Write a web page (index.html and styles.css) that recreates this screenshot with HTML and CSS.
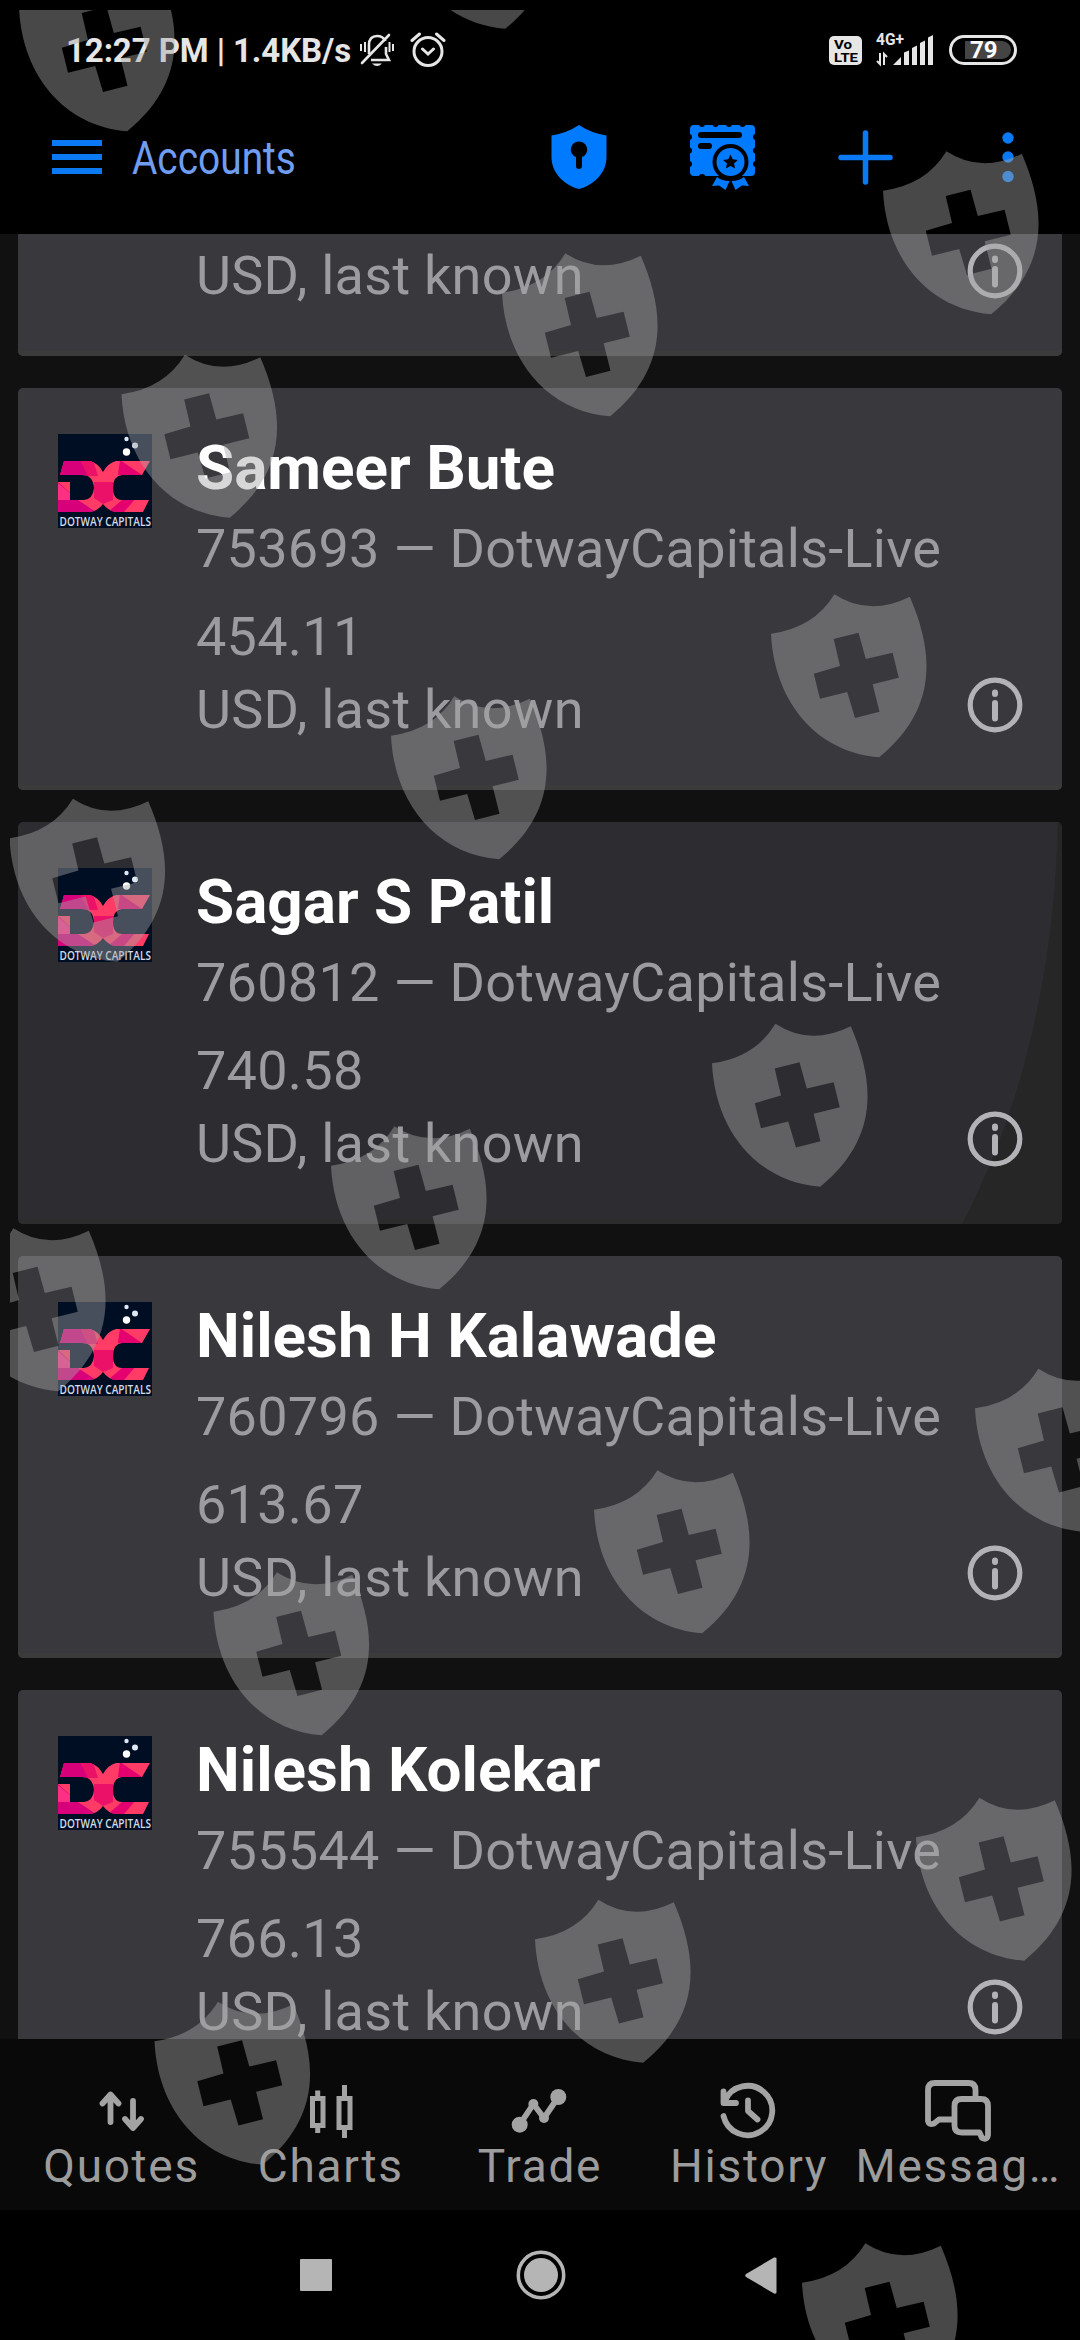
FILE: index.html
```html
<!DOCTYPE html>
<html lang="en">
<head>
<meta charset="utf-8">
<title>Accounts</title>
<link rel="stylesheet" href="styles.css">
</head>
<body>
<svg class="defs" aria-hidden="true">
  <defs>
    <symbol id="info" viewBox="0 0 56 56">
      <circle cx="28" cy="28" r="24.8" fill="none" stroke="currentColor" stroke-width="5.200"/>
      <path d="M28 15.500v1.500M28 26v15.500" stroke="currentColor" stroke-width="6" stroke-linecap="round"/>
    </symbol>
    <clipPath id="dc"><path d="M6 27H32Q40 29 45 38Q50 29 58 27H92L84 41H64Q55 42 55 54Q55 66 64 66H91L85 78H58Q50 77 45 70Q40 77 32 78H0V48H12V66H26Q35 65 36 54Q35 41 24 41H2Z"/></clipPath>
    <symbol id="logo" viewBox="0 0 94 94">
      <rect width="94" height="94" fill="#000e24"/>
      <g clip-path="url(#dc)">
        <rect width="94" height="94" fill="#ff3b66"/>
        <path d="M0 26H22L34 42H0ZM0 48L20 66L38 78H0Z" fill="#d8007a"/>
        <path d="M22 26H35L40 42H30ZM36 48H55V66L45 70L36 64Z" fill="#ec1168"/>
        <path d="M62 26L84 41H60ZM64 66L78 64L66 78H50Z" fill="#e5006f"/>
        <path d="M0 49L20 66H0Z" fill="#ff2f86"/>
      </g>
      <circle cx="68.500" cy="5" r="2.200" fill="#dfe9f5"/><circle cx="77" cy="11.500" r="3" fill="#dfe9f5"/><circle cx="68.500" cy="18" r="3.700" fill="#fff"/>
      <text x="1.500" y="91.500" class="logo-text" textLength="91.500" lengthAdjust="spacingAndGlyphs">DOTWAY CAPITALS</text>
    </symbol>
    <symbol id="guard" viewBox="0 0 160 168" overflow="visible">
      <path fill-rule="evenodd" d="M0 39.700Q43 34 63.400 0.300Q98 23 138.800 2.700C164 61 166 116 108.200 163.300C44 158 3 106 0 39.700ZM62.700 45L87.500 38.700L94.800 65L121.600 58.700L127.800 83.700L101.600 90.300L108.500 117.700L84 124L76.200 98L49 104.700L42.800 79.700L69 72Z"/>
    </symbol>
  </defs>
</svg>

<div class="screen">
  <header class="top">
    <div class="status">
      <span class="clock">12:27 PM | 1.4KB/s</span>
      <svg class="bell" width="36" height="36" viewBox="0 0 36 36" fill="none" stroke="#e6e6e6" stroke-width="2.600">
        <path d="M10 22V13C10 7 13 4 18 4C22 4 25 6 26.500 9M27 15V22L30 28H12"/>
        <path d="M30 3L3 31" stroke-linecap="round"/>
        <path d="M2 12v7M6 10v10M34 12v7M30.500 10v10" stroke-width="2"/>
        <path d="M13 31.500h10q-5 5-10 0Z" fill="#e6e6e6" stroke="none"/>
      </svg>
      <svg class="alarm" width="36" height="36" viewBox="0 0 36 36" fill="none" stroke="#e6e6e6" stroke-width="3">
        <circle cx="18" cy="19.500" r="14"/><path d="M12.500 17l5.500 5l5.500-5M2 8.500L9.500 2M34 8.500L26.500 2" stroke-linecap="round"/>
      </svg>
      <svg class="volte" width="33" height="29" viewBox="0 0 33 29">
        <rect width="33" height="29" rx="5" fill="#e6e6e6"/>
        <text x="5" y="13" class="volte-text" textLength="18" lengthAdjust="spacingAndGlyphs">Vo</text>
        <text x="5" y="25.500" class="volte-text" textLength="24" lengthAdjust="spacingAndGlyphs">LTE</text>
      </svg>
      <svg class="signal" width="58" height="34" viewBox="0 0 58 34" fill="#e6e6e6">
        <text x="0" y="12" class="net-text" textLength="28" lengthAdjust="spacingAndGlyphs">4G+</text>
        <path d="M17 32h8v-8zM28 19.500l5-2V32h-5zM36 15l5-2.500V32h-5zM44 10l5-2.500V32h-5zM52 4.500l5-2.500V32h-5z"/>
        <path d="M4 20V31L1 28M8 32V21L11 24" fill="none" stroke="#e6e6e6" stroke-width="2"/>
      </svg>
      <div class="battery"><span class="battery-text">79</span></div>
    </div>
    <div class="appbar">
      <svg class="menu" width="50" height="34" viewBox="0 0 50 34" fill="#0b79f3"><path d="M0 0h50v6H0zM0 14h50v6H0zM0 28h50v6H0z"/></svg>
      <h1 class="title">Accounts</h1>
      <svg class="lock" width="56" height="64" viewBox="0 0 56 64"><path fill="#007aff" fill-rule="evenodd" d="M28 0Q40 8 55.500 10.500V32C55.500 48 43 60 28 64C13 60 .5 48 .5 32V10.500Q16 8 28 0ZM28 16.500a8 8 0 0 0-3 15.500V41a3 3 0 0 0 6 0V32a8 8 0 0 0-3-15.500Z"/></svg>
      <svg class="cert" width="67" height="66" viewBox="0 0 67 66">
        <rect x="1" y="1" width="65" height="51" rx="4" fill="#007aff"/>
        <g fill="#000">
          <circle cx="13" cy="0" r="3"/><circle cx="26.500" cy="0" r="3"/><circle cx="40" cy="0" r="3"/><circle cx="53.500" cy="0" r="3"/>
          <circle cx="13" cy="53.500" r="3.500"/>
          <circle cx="0" cy="13" r="3"/><circle cx="0" cy="26.500" r="3"/><circle cx="0" cy="40" r="3"/>
          <circle cx="67" cy="13" r="3"/><circle cx="67" cy="26.500" r="3"/><circle cx="67" cy="40" r="3"/>
          <rect x="9" y="8" width="44" height="6" rx="3"/><rect x="9" y="19" width="14" height="6" rx="3"/>
          <circle cx="41.500" cy="38" r="18"/>
        </g>
        <path fill="#007aff" d="M28 53L23 62L30 61.500L36.500 66L40.500 57Q33 57 28 53ZM55 53L60 62L53 61.500L46.500 66L42.500 57Q50 57 55 53Z"/>
        <circle cx="41.500" cy="38" r="14" fill="#007aff"/>
        <path fill="#000" d="M41.500 30.500l2.200 4.800l5.200.6l-3.900 3.500l1.100 5.200l-4.600-2.600l-4.600 2.600l1.100-5.200l-3.900-3.500l5.200-.6z"/>
      </svg>
      <svg class="plus" width="55" height="55" viewBox="0 0 55 55"><path d="M27.500 3v49M3 27.500h49" stroke="#0b79f3" stroke-width="5.500" stroke-linecap="round"/></svg>
      <svg class="dots" width="12" height="52" viewBox="0 0 12 52" fill="#0b79f3"><circle cx="6" cy="7" r="5.700"/><circle cx="6" cy="26" r="5.700"/><circle cx="6" cy="45.500" r="5.700"/></svg>
    </div>
  </header>

  <main class="list">
    <article class="card card--cut"><p class="line">USD, last known</p><svg class="info"><use href="#info"/></svg></article>
    <article class="card">
      <svg class="logo"><use href="#logo"/></svg>
      <div class="text"><h2 class="name">Sameer Bute</h2><p class="line server">753693 — DotwayCapitals-Live</p><p class="line amount">454.11</p><p class="line">USD, last known</p></div>
      <svg class="info"><use href="#info"/></svg>
    </article>
    <article class="card card--active">
      <svg class="ripple" viewBox="0 0 1044 402" preserveAspectRatio="none"><path d="M1040 0Q1034 230 944 402H1044V0Z" fill="#262626"/></svg>
      <svg class="logo"><use href="#logo"/></svg>
      <div class="text"><h2 class="name">Sagar S Patil</h2><p class="line server">760812 — DotwayCapitals-Live</p><p class="line amount">740.58</p><p class="line">USD, last known</p></div>
      <svg class="info"><use href="#info"/></svg>
    </article>
    <article class="card">
      <svg class="logo"><use href="#logo"/></svg>
      <div class="text"><h2 class="name">Nilesh H Kalawade</h2><p class="line server">760796 — DotwayCapitals-Live</p><p class="line amount">613.67</p><p class="line">USD, last known</p></div>
      <svg class="info"><use href="#info"/></svg>
    </article>
    <article class="card">
      <svg class="logo"><use href="#logo"/></svg>
      <div class="text"><h2 class="name">Nilesh Kolekar</h2><p class="line server">755544 — DotwayCapitals-Live</p><p class="line amount">766.13</p><p class="line">USD, last known</p></div>
      <svg class="info"><use href="#info"/></svg>
    </article>
  </main>

  <nav class="tabs">
    <div class="tab"><svg viewBox="0 0 70 70"><path d="M23.500 47V20M15.500 28.500L23.500 19.500L31.500 28.500M46 26V52M38 44L46 53L54 44"/></svg><span>Quotes</span></div>
    <div class="tab"><svg viewBox="0 0 70 70"><path class="sharp" d="M16.500 23.500h10.500v27H16.500ZM43 23.500h11v29H43ZM21.700 15.500v8M21.700 50v8M48.500 10v13M48.500 53v10"/></svg><span>Charts</span></div>
    <div class="tab"><svg viewBox="0 0 70 70"><path d="M14.700 49.700L28.400 29L39 43L53.300 22"/><g class="solid"><circle cx="14.700" cy="49.700" r="8"/><circle cx="28.400" cy="29" r="5"/><circle cx="39" cy="43" r="5"/><circle cx="53.300" cy="22" r="8"/></g></svg><span>Trade</span></div>
    <div class="tab"><svg viewBox="0 0 70 70"><path d="M9.500 41A24.700 24.700 0 1 0 11 25.500M9.500 16.500V28H22M34 25.500V36L43.500 44.500"/></svg><span>History</span></div>
    <div class="tab"><svg viewBox="0 0 70 70"><path d="M52.500 23V15Q52.500 8 45.500 8H12Q5 8 5 15V46Q6 50.500 11 48.500L16 44.500H30M38.500 24H58Q65 24 65 31V60Q64 65.500 59 63L56.500 57.500H38.500Q31.500 57.500 31.500 50.500V31Q31.500 24 38.500 24Z"/></svg><span>Messag…</span></div>
  </nav>

  <div class="sysnav">
    <svg width="32" height="32" viewBox="0 0 32 32"><rect width="32" height="32" rx="1" fill="#b5b5b5"/></svg>
    <svg width="50" height="50" viewBox="0 0 50 50"><circle cx="25" cy="25" r="22.700" fill="none" stroke="#b5b5b5" stroke-width="3.500"/><circle cx="25" cy="25" r="17" fill="#b5b5b5"/></svg>
    <svg width="32" height="37" viewBox="0 0 32 37"><path d="M1 17L29 .5Q31.500 0 31.500 1.500V35.500Q31.500 37 29 36.500L1 20Q-.5 18.500 1 17Z" fill="#b5b5b5"/></svg>
  </div>

  <svg class="overlay" viewBox="10 10 1070 2330">
    <use href="#guard" x="19" y="-32" width="160" height="168"/>
    <use href="#guard" x="397" y="-134.500" width="160" height="168"/>
    <use href="#guard" x="883" y="151" width="160" height="168"/>
    <use href="#guard" x="502" y="253" width="160" height="168"/>
    <use href="#guard" x="121.500" y="354.500" width="160" height="168"/>
    <use href="#guard" x="771" y="594" width="160" height="168"/>
    <use href="#guard" x="391" y="696" width="160" height="168"/>
    <use href="#guard" x="9.500" y="798.500" width="160" height="168"/>
    <use href="#guard" x="712" y="1023.500" width="160" height="168"/>
    <use href="#guard" x="331" y="1126" width="160" height="168"/>
    <use href="#guard" x="-50" y="1228" width="160" height="168"/>
    <use href="#guard" x="975" y="1368.500" width="160" height="168"/>
    <use href="#guard" x="594" y="1470" width="160" height="168"/>
    <use href="#guard" x="213.500" y="1572" width="160" height="168"/>
    <use href="#guard" x="916" y="1797.500" width="160" height="168"/>
    <use href="#guard" x="535" y="1899.500" width="160" height="168"/>
    <use href="#guard" x="154.500" y="2001.500" width="160" height="168"/>
    <use href="#guard" x="802" y="2243" width="160" height="168"/>
  </svg>
</div>
</body>
</html>
```
FILE: styles.css
```css
* { box-sizing: border-box; margin: 0; padding: 0; }
body { background: #000; font-family: Roboto, "Liberation Sans", sans-serif; }
svg { display: block; flex: none; }
.defs { position: absolute; width: 0; height: 0; }
.screen { position: relative; width: 1080px; height: 2340px; overflow: hidden; display: flex; flex-direction: column; background: #000; }

.top { height: 234px; flex: none; }
.status { height: 100px; display: flex; align-items: center; color: #e6e6e6; padding-left: 66px; }
.clock { width: 285px; font-size: 33px; font-weight: 700; letter-spacing: -.1px; white-space: nowrap; }
.bell { margin-left: 8px; }
.alarm { margin-left: 15px; }
.volte { margin-left: 383px; }
.volte-text { font: 700 13.500px Roboto, sans-serif; fill: #000; }
.signal { margin-left: 14px; overflow: visible; }
.net-text { font: 700 16px Roboto, sans-serif; }
.battery { width: 68px; height: 30px; margin-left: 15px; border: 3px solid #e6e6e6; border-radius: 15px; padding: 3px; display: flex; justify-content: flex-end; align-items: stretch; }
.battery-text { width: 46px; background: #444; border-radius: 0 9px 9px 0; font-size: 24px; font-weight: 700; line-height: 19px; color: #fff; padding-left: 5px; }
.logo-text { font: 600 12.500px "Open Sans", sans-serif; fill: #d5dbe5; }

.appbar { height: 114px; display: flex; align-items: center; padding-left: 52px; }
.title { width: 164px; margin: 2px 0 0 30px; font-size: 46px; font-weight: 400; color: #6f9df2; transform: scaleX(.845); transform-origin: left; white-space: nowrap; }
.lock { margin-left: 255px; }
.cert { margin-left: 82px; }
.plus { margin-left: 82px; }
.dots { margin-left: 109px; }

.list { flex: 1; min-height: 0; overflow: hidden; background: #111; padding: 0 18px; display: flex; flex-direction: column; gap: 32px; }
.card { position: relative; flex: none; width: 1044px; height: 402px; padding: 38px 39px 0 40px; background: #39383d; border-radius: 5px; box-shadow: inset 0 -5px #3b3b3b; display: flex; align-items: flex-start; overflow: hidden; }
.card--cut { height: 122px; padding: 5px 39px 0 178px; border-radius: 0 0 5px 5px; }
.card--active { background: #2d2c30; box-shadow: inset 0 -5px #2c2c2c; }
.ripple { position: absolute; left: 0; top: 0; width: 1044px; height: 402px; }
.logo { position: relative; width: 94px; height: 94px; margin-top: 8px; }
.text { position: relative; flex: 1; margin-left: 44px; }
.name { font-size: 62px; line-height: 84px; font-weight: 700; color: #fff; white-space: nowrap; margin-bottom: 2px; }
.line { flex: 1; font-size: 54px; line-height: 73px; letter-spacing: .27px; color: #9c9b9f; white-space: nowrap; }
.server { margin-bottom: 15px; }
.info { position: relative; width: 56px; height: 56px; color: #b3b2b6; margin: 251px 0 0 -56px; }
.card--cut .info { margin-top: 4px; }

.tabs { height: 171px; flex: none; background: #090909; padding: 36px 17px 0; display: grid; grid-template-columns: repeat(5, 1fr); }
.tab { display: flex; flex-direction: column; align-items: center; color: #9c9c9c; font-size: 46px; line-height: 42px; letter-spacing: 1.700px; white-space: nowrap; }
.tab svg { width: 70px; height: 70px; fill: none; stroke: #a3a3a3; stroke-width: 5.800; stroke-linecap: round; stroke-linejoin: round; }
.tab .sharp { stroke-width: 5; stroke-linecap: butt; stroke-linejoin: miter; }
.tab .solid { fill: #a3a3a3; stroke: none; }

.sysnav { height: 130px; flex: none; display: flex; align-items: center; padding-left: 300px; }
.sysnav svg:nth-child(2) { margin-left: 184px; }
.sysnav svg:nth-child(3) { margin-left: 179px; }

.overlay { position: absolute; left: 10px; top: 10px; width: 1070px; height: 2330px; fill: rgba(163, 163, 163, .44); overflow: hidden; pointer-events: none; }
```
